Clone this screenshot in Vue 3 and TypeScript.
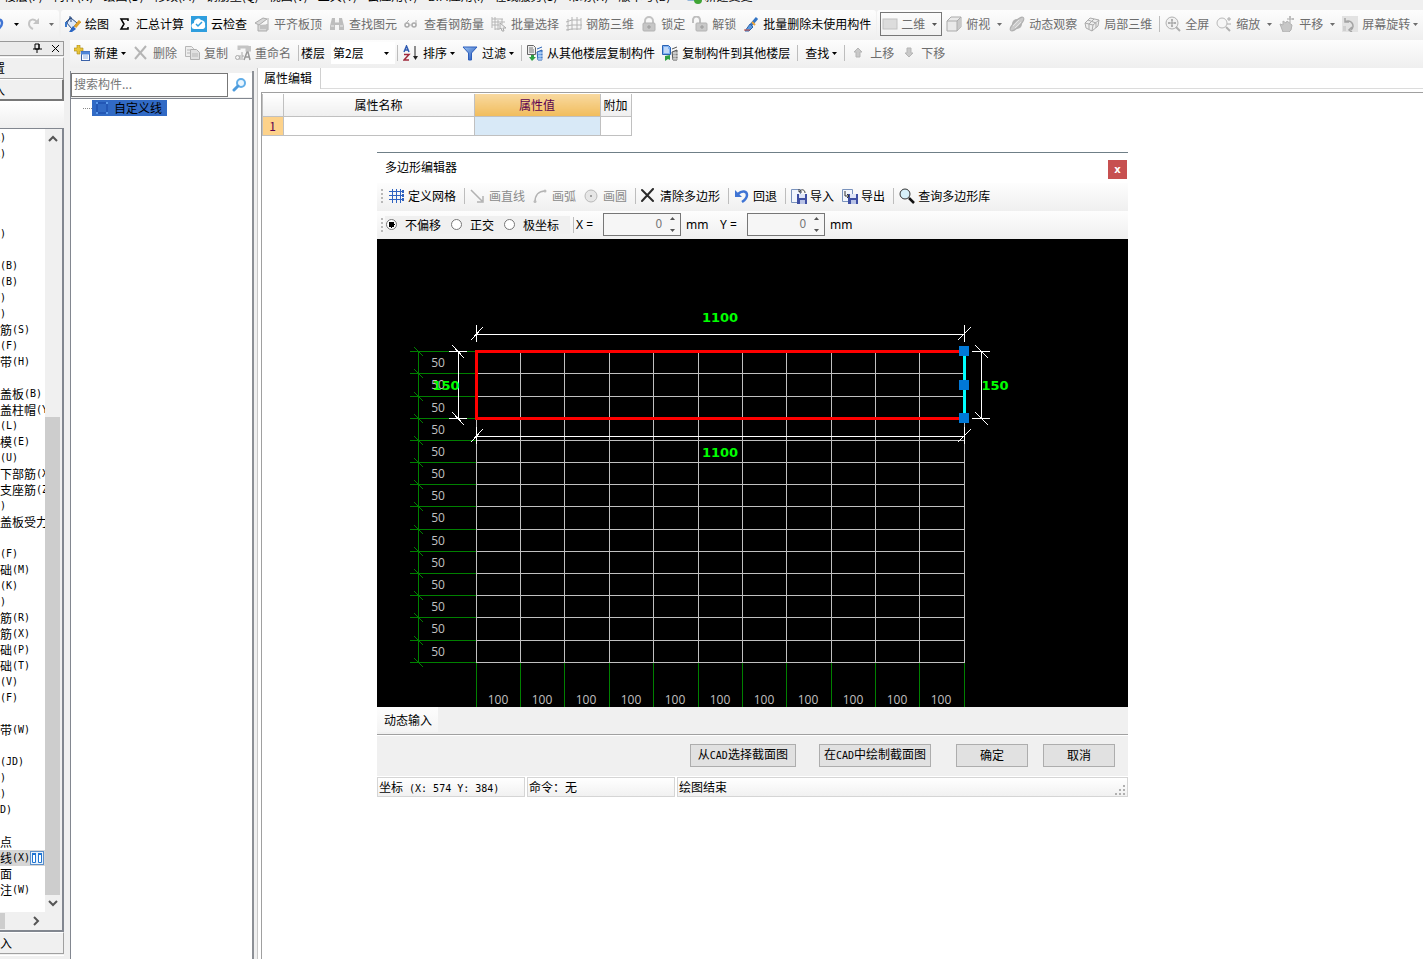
<script setup lang="ts">
import { ref } from 'vue'

interface Tool {
  icon?: string
  text?: string
  off?: boolean
  caret?: 'near' | 'far'
  sep?: boolean
}

interface Row {
  zh?: string
  en?: string
  cut?: boolean
  active?: boolean
}

const menus = ['楼层(F)', '构件(N)', '绘图(D)', '修改(M)', '钢筋量(Q)', '视图(V)', '工具(T)', '云应用(Y)', 'BIM应用(I)', '在线服务(S)', '帮助(H)', '版本号(B)']

const drawTools: Tool[] = [
  { icon: 'paint', text: '绘图' },
  { icon: 'sigma', text: '汇总计算' },
  { icon: 'cloud', text: '云检查' },
  { icon: 'slab', text: '平齐板顶', off: true },
  { icon: 'binoc', text: '查找图元', off: true },
  { icon: 'glasses', text: '查看钢筋量', off: true },
  { icon: 'batch', text: '批量选择', off: true },
  { icon: 'rebar', text: '钢筋三维', off: true },
  { icon: 'lock', text: '锁定', off: true },
  { icon: 'unlock', text: '解锁', off: true },
  { icon: 'brush', text: '批量删除未使用构件' },
]

const viewTools: Tool[] = [
  { icon: 'cube', text: '俯视', off: true, caret: 'far' },
  { icon: 'orbit', text: '动态观察', off: true },
  { icon: 'local3d', text: '局部三维', off: true },
  { sep: true },
  { icon: 'full', text: '全屏', off: true },
  { icon: 'zoom', text: '缩放', off: true, caret: 'far' },
  { icon: 'hand', text: '平移', off: true, caret: 'far' },
  { icon: 'rotate', text: '屏幕旋转', off: true, caret: 'near' },
]

const editTools: Tool[] = [
  { icon: 'new', text: '新建', caret: 'near' },
  { icon: 'del', text: '删除', off: true },
  { icon: 'copy', text: '复制', off: true },
  { icon: 'rename', text: '重命名', off: true },
]

const floorTools: Tool[] = [
  { sep: true },
  { icon: 'sort', text: '排序', caret: 'near' },
  { icon: 'filter', text: '过滤', caret: 'near' },
  { sep: true },
  { icon: 'copyfrom', text: '从其他楼层复制构件' },
  { icon: 'copyto', text: '复制构件到其他楼层' },
  { sep: true },
  { text: '查找', caret: 'near' },
  { sep: true },
  { icon: 'up', text: '上移', off: true },
  { icon: 'down', text: '下移', off: true },
]

const polyTools: Tool[] = [
  { icon: 'grid', text: '定义网格' },
  { sep: true },
  { icon: 'line', text: '画直线', off: true },
  { icon: 'arc', text: '画弧', off: true },
  { icon: 'circle', text: '画圆', off: true },
  { sep: true },
  { icon: 'clear', text: '清除多边形' },
  { sep: true },
  { icon: 'undo', text: '回退' },
  { sep: true },
  { icon: 'import', text: '导入' },
  { icon: 'export', text: '导出' },
  { sep: true },
  { icon: 'search', text: '查询多边形库' },
]

const rows: Row[] = [
  { en: 'A)', cut: true }, { en: 'A)', cut: true }, {}, {}, {}, {}, { en: ')' }, {},
  { en: '(B)' }, { en: '(B)' }, { en: 'Y)', cut: true }, { en: 'Y)', cut: true },
  { zh: '筋', en: '(S)' }, { en: '(F)' }, { zh: '带', en: '(H)' }, {},
  { zh: '盖板', en: '(B)' }, { zh: '盖柱帽', en: '(Y)' }, { en: '(L)' }, { zh: '模', en: '(E)' },
  { en: '(U)' }, { zh: '下部筋', en: '(X)' }, { zh: '支座筋', en: '(Z)' }, { en: ')' },
  { zh: '盖板受力' }, {}, { en: '(F)' }, { zh: '础', en: '(M)' },
  { en: '(K)' }, { en: ')' }, { zh: '筋', en: '(R)' }, { zh: '筋', en: '(X)' },
  { zh: '础', en: '(P)' }, { zh: '础', en: '(T)' }, { en: '(V)' }, { en: '(F)' }, {},
  { zh: '带', en: '(W)' }, {}, { en: '(JD)' }, { en: ')' }, { en: 'X)', cut: true }, { en: 'D)' }, {},
  { zh: '点' }, { zh: '线', en: '(X)', active: true }, { zh: '面' }, { zh: '注', en: '(W)' },
]

/* Drawing area coordinates */
const gx = [99, 143, 187, 232, 276, 321, 365, 409, 454, 498, 542, 587]
const gy = [112, 134, 157, 179, 201, 223, 245, 267, 290, 312, 334, 356, 378, 401, 423]

const offsetMode = ref('none')
const modes = [
  { id: 'none', text: '不偏移' },
  { id: 'ortho', text: '正交' },
  { id: 'polar', text: '极坐标' },
]
const axes = ref([
  { name: 'X', value: '0' },
  { name: 'Y', value: '0' },
])
const keyword = ref('')
</script>

<template>
  <svg class="defs" width="0" height="0" aria-hidden="true">
    <linearGradient id="gBlue" x1="0" y1="0" x2="1" y2="1"><stop offset="0" stop-color="#9cc4f4" /><stop offset="1" stop-color="#1d4fb4" /></linearGradient>
    <symbol id="i-paint" viewBox="0 0 16 16"><path d="M1 6 6 2l6 5-5 6z" fill="#dfe9f8" stroke="#24477f" /><path d="M2 7 5 1.500M6 6V1L4 1" fill="none" stroke="#24477f" /><path d="M1 6v5" stroke="#3a78cc" stroke-width="2" /><path d="m15 5-5 6" stroke="#e0a12c" stroke-width="3" /><path d="M8 10l3 3-4 3H4z" fill="#2c67c4" /></symbol>
    <symbol id="i-sigma" viewBox="0 0 16 16"><path d="M12 5V3H5l3 5-3 5h7v-2" fill="none" stroke="#000" stroke-width="1.500" /></symbol>
    <symbol id="i-cloud" viewBox="0 0 16 16"><rect width="16" height="16" fill="#2f9ede" /><path d="M4 13a3 3 0 0 1-1-6 4 4 0 0 1 7-3 4 4 0 0 1 4 5 3 3 0 0 1-2 4z" fill="#fff" /><path d="m5 8 2 2 4-4" fill="none" stroke="#2f9ede" stroke-width="1.500" /></symbol>
    <symbol id="i-slab" viewBox="0 0 16 16"><path d="m1 7 8-5 4 1-8 6zM4 9v6h9V8" fill="#d8d8d8" stroke="#ababab" /><path d="M6 10h6M6 12h6M14 2v12" stroke="#aaa" /></symbol>
    <symbol id="i-binoc" viewBox="0 0 16 16"><path d="M3 2h3v4h4V2h3l2 8v4h-5V9H6v5H1v-4z" fill="#bdbdbd" /><path d="M2 10h3M11 10h3M7 4v3M9 4v3" stroke="#eee" /></symbol>
    <symbol id="i-glasses" viewBox="0 0 16 16"><circle cx="3" cy="9" r="2" fill="none" stroke="#aaa" stroke-width="1.500" /><circle cx="10" cy="9" r="2" fill="none" stroke="#aaa" stroke-width="1.500" /><path d="M1 8 5 4M12 10V4M5 9h3" fill="none" stroke="#b5b5b5" /></symbol>
    <symbol id="i-batch" viewBox="0 0 16 16"><path d="M1 1v11M4 1v13M1 3h11M1 6h13M1 9h7M7 4v10M11 3v5M4 13h5" stroke="#b5b5b5" fill="none" /><path d="m9 7 6 5-3 0 1 3-2 0-1-3-1 1z" fill="#eee" stroke="#aaa" /></symbol>
    <symbol id="i-rebar" viewBox="0 0 16 16"><path d="M2 3v12M6 1v13M11 1v13M15 2v11M0 6l6-2h9M0 10l6-1h10M0 14l6-1h9" stroke="#b4b4b4" fill="none" /></symbol>
    <symbol id="i-lock" viewBox="0 0 16 16"><path d="M4 8V5a4 4 0 0 1 8 0v3" fill="none" stroke="#c2c2c2" stroke-width="2" /><rect x="2" y="7" width="12" height="8" rx="1" fill="#c6c6c6" stroke="#b3b3b3" /><path d="M8 9v4M6 11h4" stroke="#999" /></symbol>
    <symbol id="i-unlock" viewBox="0 0 16 16"><path d="M1 7V4a3 3 0 0 1 7 0v3" fill="none" stroke="#bebebe" stroke-width="2" /><rect x="4" y="7" width="11" height="8" rx="1" fill="#c9c9c9" stroke="#b3b3b3" /><path d="M10 9v4M8 11h4" stroke="#999" /></symbol>
    <symbol id="i-brush" viewBox="0 0 16 16"><path d="m14 2-6 7" stroke="#3475c4" stroke-width="3" /><path d="m9 6 3 3" stroke="#e9a33b" stroke-width="2" /><path d="M7 8l3 3-4 4H2z" fill="#5a9ae0" stroke="#2e63ab" /><path d="M1 14h6" stroke="#d44d37" /></symbol>
    <symbol id="i-rect" viewBox="0 0 16 16"><rect x="1" y="3" width="14" height="10" fill="#dcdcdc" stroke="#c2c2c2" /></symbol>
    <symbol id="i-cube" viewBox="0 0 16 16"><path d="M1 5 5 1h10v10l-4 4H1z" fill="#e9e9e9" stroke="#ababab" /><path d="m11 5 4-4v10l-4 4z" fill="#c9c9c9" /><path d="M1 5h10v10M11 5l4-4" fill="none" stroke="#ababab" /></symbol>
    <symbol id="i-orbit" viewBox="0 0 16 16"><circle cx="8" cy="8" r="5" fill="#b4b4b4" /><ellipse cx="8" cy="8" rx="9" ry="3" transform="rotate(-45 8 8)" fill="#cacaca" stroke="#b0b0b0" /><path d="m4 10 6-6M6 12l6-6" stroke="#e4e4e4" /></symbol>
    <symbol id="i-local3d" viewBox="0 0 16 16"><path d="m1 7 5-5 9 2-1 6-6 5-6-3z" fill="#eee" stroke="#ababab" /><path d="m1 7 8 2 6-5M9 9l-1 6M5 8v5M4 4l8 3v5M10 3 5 8" fill="none" stroke="#ababab" /></symbol>
    <symbol id="i-full" viewBox="0 0 16 16"><circle cx="7" cy="7" r="6" fill="#f1f1f1" stroke="#b0b0b0" /><path d="M7 3v8M3 7h8M6 4h2M6 10h2M4 6v2M10 6v2" stroke="#999" /><path d="m11 11 4 4" stroke="#b0b0b0" stroke-width="2" /></symbol>
    <symbol id="i-zoom" viewBox="0 0 16 16"><circle cx="6" cy="7" r="5" fill="#f6f6f6" stroke="#b9b9b9" /><path d="m10 11 4 4" stroke="#b0b0b0" stroke-width="2" /><path d="M13 1v4M11 3h4M11 8h4" stroke="#aaa" /></symbol>
    <symbol id="i-hand" viewBox="0 0 16 16"><path d="M1 8l3 1V5l3 2 1-2 5 4-1 5-2 2H4z" fill="#c7c7c7" stroke="#b2b2b2" /><path d="M11 0v7M8 3h7M10 1h2M14 2v2" stroke="#aaa" /></symbol>
    <symbol id="i-rotate" viewBox="0 0 16 16"><rect width="16" height="16" fill="#e2e2e2" /><path d="M3 6a5 5 0 1 1 6 8M3 2v4h4M10 11l-3 3 3 2" fill="none" stroke="#a4a4a4" stroke-width="1.500" /><rect x="1" y="10" width="3" height="5" fill="#cfcfcf" /></symbol>
    <symbol id="i-new" viewBox="0 0 16 16"><path d="M3 0h3v3h3v3H6v3H3V6H0V3h3z" fill="#e8c53a" stroke="#a98716" stroke-width=".6" /><rect x="7.500" y="6.500" width="8" height="9" fill="#fff" stroke="#3b62a8" /><path d="M7 8h9" stroke="#4f86d9" stroke-width="3" /><path d="M9 11h5M9 13h5" stroke="#8db0e4" /></symbol>
    <symbol id="i-del" viewBox="0 0 16 16"><path d="m2 2 11 12M13 1 2 14" stroke="#b5b5b5" stroke-width="2" /></symbol>
    <symbol id="i-copy" viewBox="0 0 16 16"><path d="M1.500 1.500h6l2 2v8h-8z" fill="#eee" stroke="#b7b7b7" /><path d="M6.500 4.500h6l3 3v7h-9z" fill="#e0e0e0" stroke="#b0b0b0" /><path d="M3 5h3M3 8h3M8 9h6M8 11h6" stroke="#b7b7b7" /></symbol>
    <symbol id="i-rename" viewBox="0 0 16 16"><path d="M4 5V2h8v3h3V1" fill="none" stroke="#c4c4c4" stroke-width="3" /><path d="m9 15 3-8h1l2 8M10 12h4" fill="none" stroke="#999" stroke-width="1.500" /><circle cx="2.500" cy="12.500" r="2" fill="none" stroke="#aaa" /><path d="M5 10v5M7 7v8M7 11h2" fill="none" stroke="#aaa" /></symbol>
    <symbol id="i-sort" viewBox="0 0 16 16"><path d="m1 7 2.500-6L6 7M2 5h3" fill="none" stroke="#2f5ab0" stroke-width="1.500" /><path d="M1 9.500h5L1 15h5" fill="none" stroke="#a02a3c" stroke-width="1.500" /><path d="M12 1v12" stroke="#222" /><path d="M10 11h5l-2.500 4z" fill="#222" /></symbol>
    <symbol id="i-filter" viewBox="0 0 16 16"><path d="M1 2h14L9.500 8v7h-3V8z" fill="url(#gBlue)" stroke="#2d5fbd" /></symbol>
    <symbol id="i-copyfrom" viewBox="0 0 16 16"><path d="M.5.500h6l2 2v7h-8z" fill="#eee" stroke="#666" /><path d="M2 3h4M2 5h5M2 7h5" stroke="#777" /><path d="M10 4l5-2M10 7l5-2v10h-4z" fill="#6fa6e8" stroke="#2a62b4" /><path d="M11 8h5M11 11h5M11 14h5" stroke="#dcebff" /><path d="M4 10v2H2l3 4 4-4H7v-2z" fill="#2ea043" /></symbol>
    <symbol id="i-copyto" viewBox="0 0 16 16"><path d="M.5.500h6l2 2v7h-8z" fill="#7fb0f0" stroke="#2a62b4" /><path d="M2 3h4M2 5h5M2 7h5" stroke="#fff" /><path d="M10 4l5-2M10 7l5-2v10h-4z" fill="#aaa" stroke="#555" /><path d="M11 8h5M11 11h5M11 14h5" stroke="#eee" /><path d="M3 11l5-1v5l-2-1-3 2z" fill="#2ea043" /></symbol>
    <symbol id="i-up" viewBox="0 0 16 16"><path d="M8 3l4 4h-2v5H6V7H4z" fill="#c9c9c9" stroke="#b5b5b5" /></symbol>
    <symbol id="i-down" viewBox="0 0 16 16"><path d="M8 12l4-4h-2V3H6v5H4z" fill="#c9c9c9" stroke="#b5b5b5" /></symbol>
    <symbol id="i-grid" viewBox="0 0 16 16"><path d="M3.500 1v14M7.500 1v14M11.500 1v14M0 3.500h14M0 7.500h14M0 11.500h14" stroke="#2f62c0" /><path d="M13 2h2v3h-2zM13 6h2v3h-2zM13 10h2v3h-2z" fill="#2f62c0" /></symbol>
    <symbol id="i-line" viewBox="0 0 16 16"><path d="m1 2 11 11M13 8v6H7" fill="none" stroke="#b2b2b2" stroke-width="1.500" /></symbol>
    <symbol id="i-arc" viewBox="0 0 16 16"><path d="M2 14C2 7 6 3 12 3" fill="none" stroke="#b2b2b2" stroke-width="1.500" /><circle cx="2" cy="13.500" r="1.500" fill="#bbb" /><circle cx="12" cy="3" r="1.500" fill="#bbb" /></symbol>
    <symbol id="i-circle" viewBox="0 0 16 16"><circle cx="7" cy="8" r="6" fill="#e6e6e6" stroke="#b9b9b9" /><circle cx="7" cy="8" r="1" fill="#888" /></symbol>
    <symbol id="i-clear" viewBox="0 0 16 16"><path d="m1 2 11 11M12 1 1 13" stroke="#2b2b2b" stroke-width="2" stroke-linecap="round" /></symbol>
    <symbol id="i-undo" viewBox="0 0 16 16"><path d="M4 6c4-4 9-3 9 1 0 3-2 5-5 7" fill="none" stroke="#3f74d4" stroke-width="2.500" /><path d="M1 2v7h7z" fill="#3f74d4" /></symbol>
    <symbol id="i-redo" viewBox="0 0 16 16"><path d="M10 6C7 2 2 3 2 8c0 3 2 4 4 5" fill="none" stroke="#c4c4c4" stroke-width="2" /><path d="M12 2v6H6z" fill="#c4c4c4" /></symbol>
    <symbol id="i-import" viewBox="0 0 16 16"><path d="M.5 1.500h9v13h-9z" fill="#f2f6fd" stroke="#7a93bd" /><rect x="6" y="6" width="10" height="10" fill="#3e4fa3" /><rect x="8" y="6" width="6" height="4" fill="#dfe5f7" /><rect x="9" y="12" width="5" height="4" fill="#b9c3e6" /><path d="M8 4c3-4 6-2 6 1M8 1v3h3" fill="none" stroke="#444" /></symbol>
    <symbol id="i-export" viewBox="0 0 16 16"><path d="M.5 1.500h10v12H.5z" fill="#f2f6fd" stroke="#7a93bd" /><rect x="6" y="6" width="10" height="10" fill="#3e4fa3" /><rect x="8" y="6" width="6" height="4" fill="#dfe5f7" /><rect x="9" y="12" width="5" height="4" fill="#b9c3e6" /><path d="M3 3v5h4M5 6l2 2-2 2" fill="none" stroke="#333" /></symbol>
    <symbol id="i-search" viewBox="0 0 16 16"><circle cx="6" cy="6" r="5" fill="#d8f1fa" stroke="#333" /><path d="m10 10 5 5" stroke="#111" stroke-width="2.500" /></symbol>
    <symbol id="i-find" viewBox="0 0 16 16"><circle cx="9" cy="6" r="4" fill="#eaf6ff" stroke="#62aee8" stroke-width="2" /><path d="m6 9-4 4" stroke="#4d9bdc" stroke-width="3" stroke-linecap="round" /></symbol>
    <symbol id="i-doc" viewBox="0 0 16 16"><rect x="1" y="1" width="13" height="11" fill="#fff" stroke="#3a7cc4" /><circle cx="11" cy="12" r="4" fill="#3fa535" /></symbol>
    <symbol id="i-shape" viewBox="0 0 16 16"><path d="M3 3h10v10H3z" fill="none" stroke="#1745a5" /><path d="M2 2h2v2H2zM12 2h2v2h-2zM2 12h2v2H2zM12 12h2v2h-2z" fill="#5b9bea" /></symbol>
    <symbol id="i-book" viewBox="0 0 12 12"><path d="M0 0h12v12H0z" fill="#e7f2fd" /><path d="M1.500 2.500h3v8h-3zM7.500 2.500h3v8h-3z" fill="#fff" stroke="#1f74d2" /><path d="M1 2h4M7 2h4" stroke="#1f74d2" stroke-width="2" /></symbol>
    <symbol id="i-caret" viewBox="0 0 5 3"><path d="M0 0h5L2.500 3z" fill="currentColor" /></symbol>
  </svg>

  <div class="app">
    <nav class="menu">
      <a v-for="m in menus" :key="m" href="#">{{ m }}</a>
      <svg class="ico"><use href="#i-doc" /></svg>
      <a href="#">新建变更</a>
    </nav>

    <div class="top">
      <div class="bar history">
        <button class="tool" aria-label="撤销"><svg class="ico"><use href="#i-undo" /></svg></button>
        <button class="drop" aria-label="撤销列表"><svg class="caret"><use href="#i-caret" /></svg></button>
        <button class="tool redo" aria-label="恢复"><svg class="ico"><use href="#i-redo" /></svg></button>
        <button class="drop off" aria-label="恢复列表"><svg class="caret"><use href="#i-caret" /></svg></button>
      </div>
      <div class="bar draw">
        <button v-for="t in drawTools" :key="t.text" class="tool" :class="{ off: t.off }">
          <svg class="ico"><use :href="'#i-' + t.icon" /></svg>{{ t.text }}
        </button>
      </div>
      <div class="bar view">
        <div class="dimension">
          <svg class="ico"><use href="#i-rect" /></svg>
          <select aria-label="视图维度"><option>二维</option><option>三维</option></select>
          <svg class="caret"><use href="#i-caret" /></svg>
        </div>
        <template v-for="(t, i) in viewTools" :key="i">
          <span v-if="t.sep" class="sep"></span>
          <button v-else class="tool off">
            <svg class="ico"><use :href="'#i-' + t.icon" /></svg>{{ t.text }}
            <svg v-if="t.caret" class="caret" :class="t.caret"><use href="#i-caret" /></svg>
          </button>
        </template>
      </div>
    </div>

    <div class="body">
      <aside class="dock">
        <header class="dock-head">
          <button aria-label="固定"><svg width="9" height="11" viewBox="0 0 9 11"><path d="M2 1h4v5H2zM0 6h9M4 6v4M6 1v5" fill="none" stroke="#000" /></svg></button>
          <button aria-label="关闭"><svg width="9" height="9" viewBox="0 0 9 9"><path d="m1 1 7 7M8 1 1 8" stroke="#000" /></svg></button>
        </header>
        <button class="fold"><span class="clipped">置</span></button>
        <button class="fold deep"><span class="clipped">入</span></button>
        <div class="strip"></div>
        <div class="list">
          <div class="list-main">
            <ul>
              <li v-for="(r, i) in rows" :key="i" :class="{ cut: r.cut, active: r.active }">
                <span v-if="r.zh">{{ r.zh }}</span><span v-if="r.en" class="half">{{ r.en }}</span>
                <svg v-if="r.active" class="mark"><use href="#i-book" /></svg>
              </li>
            </ul>
            <div class="scroll">
              <svg width="16" height="17" viewBox="0 0 16 17"><path d="m4 10 4-4 4 4" fill="none" stroke="#555" stroke-width="2" /></svg>
              <i class="before"></i><i class="thumb"></i>
              <svg width="16" height="17" viewBox="0 0 16 17"><path d="m4 6 4 4 4-4" fill="none" stroke="#555" stroke-width="2" /></svg>
            </div>
          </div>
          <div class="hscroll"><i></i><svg width="8" height="16" viewBox="0 0 8 16"><path d="m2 4 4 4-4 4" fill="none" stroke="#555" stroke-width="2" /></svg></div>
        </div>
        <button class="fold last">入</button>
        <div class="rest"></div>
      </aside>

      <div class="work">
        <div class="bar edit">
          <button v-for="t in editTools" :key="t.text" class="tool" :class="{ off: t.off }">
            <svg class="ico"><use :href="'#i-' + t.icon" /></svg>{{ t.text }}
            <svg v-if="t.caret" class="caret" :class="t.caret"><use href="#i-caret" /></svg>
          </button>
          <span class="sep tight"></span>
          <label for="floor">楼层</label>
          <div class="floor">
            <select id="floor"><option>第2层</option><option>第1层</option></select>
            <svg class="caret"><use href="#i-caret" /></svg>
          </div>
          <template v-for="(t, i) in floorTools" :key="i">
            <span v-if="t.sep" class="sep"></span>
            <button v-else class="tool" :class="{ off: t.off, plain: !t.icon }">
              <svg v-if="t.icon" class="ico"><use :href="'#i-' + t.icon" /></svg>{{ t.text }}
              <svg v-if="t.caret" class="caret" :class="t.caret"><use href="#i-caret" /></svg>
            </button>
          </template>
        </div>

        <div class="panes">
          <section class="tree">
            <div class="find">
              <input v-model="keyword" type="text" placeholder="搜索构件..." aria-label="搜索构件">
              <button aria-label="搜索"><svg class="ico"><use href="#i-find" /></svg></button>
            </div>
            <div class="nodes">
              <i class="twig"></i>
              <button class="node"><svg class="ico"><use href="#i-shape" /></svg>自定义线</button>
            </div>
          </section>

          <section class="props">
            <div class="tabs"><button class="tab">属性编辑</button></div>
            <div class="sheet">
              <table>
                <thead>
                  <tr><th class="c-num"></th><th class="c-name">属性名称</th><th class="c-value">属性值</th><th class="c-add">附加</th></tr>
                </thead>
                <tbody>
                  <tr><td class="num">1</td><td></td><td class="cell"></td><td></td></tr>
                </tbody>
              </table>
            </div>
          </section>
        </div>
      </div>
    </div>

    <div class="dialog" role="dialog" aria-label="多边形编辑器">
      <header class="title"><span>多边形编辑器</span><button class="close" aria-label="关闭">x</button></header>
      <div class="bar poly">
        <i class="grip"></i>
        <template v-for="(t, i) in polyTools" :key="i">
          <span v-if="t.sep" class="sep"></span>
          <button v-else class="tool" :class="{ off: t.off }"><svg class="ico"><use :href="'#i-' + t.icon" /></svg>{{ t.text }}</button>
        </template>
      </div>
      <div class="bar options">
        <i class="grip"></i>
        <div class="modes">
          <label v-for="m in modes" :key="m.id"><input v-model="offsetMode" type="radio" name="mode" :value="m.id">{{ m.text }}</label>
        </div>
        <span class="sep"></span>
        <template v-for="a in axes" :key="a.name">
          <label class="axis" :for="'axis' + a.name">{{ a.name }} =</label>
          <div class="spin">
            <input :id="'axis' + a.name" v-model="a.value" type="text">
            <div class="arrows">
              <button aria-label="增加"><svg width="5" height="3" viewBox="0 0 5 3"><path d="M0 3h5L2.500 0z" fill="#555" /></svg></button>
              <button aria-label="减少"><svg width="5" height="3" viewBox="0 0 5 3"><path d="M0 0h5L2.500 3z" fill="#555" /></svg></button>
            </div>
          </div>
          <span class="unit">mm</span>
        </template>
      </div>

      <svg class="canvas" viewBox="0 0 751 468" shape-rendering="crispEdges">
        <rect width="751" height="468" fill="#000" />
        <g fill="#008000">
          <rect x="41" y="112" width="1" height="312" />
          <rect v-for="y in gy" :key="'gh' + y" x="33" :y="y" width="66" height="1" />
          <rect v-for="x in gx" :key="'gv' + x" :x="x" y="424" width="1" height="44" />
        </g>
        <path v-for="y in gy" :key="'t' + y" :d="`M37 ${y - 4}l9 9`" stroke="#008000" />
        <g fill="#c0c0c0">
          <rect v-for="y in gy" :key="'h' + y" x="99" :y="y" width="489" height="1" />
          <rect v-for="x in gx" :key="'v' + x" :x="x" y="112" width="1" height="312" />
        </g>
        <g class="small">
          <text v-for="y in gy.slice(0, -1)" :key="'a' + y" x="61" :y="y + 16" text-anchor="middle">50</text>
          <text v-for="x in gx.slice(0, -1)" :key="'b' + x" :x="x + 22" y="465" text-anchor="middle">100</text>
        </g>
        <g fill="#fff">
          <rect x="99" y="95" width="489" height="1" /><rect x="99" y="197" width="489" height="1" />
          <rect x="99" y="86" width="1" height="17" /><rect x="587" y="86" width="1" height="17" />
          <rect x="99" y="188" width="1" height="17" /><rect x="587" y="188" width="1" height="17" />
          <rect x="81" y="112" width="1" height="68" /><rect x="604" y="112" width="1" height="68" />
          <rect x="72" y="112" width="18" height="1" /><rect x="72" y="179" width="18" height="1" />
          <rect x="595" y="112" width="18" height="1" /><rect x="595" y="179" width="18" height="1" />
        </g>
        <path d="M94 101l12-13M581 101l13-13M94 203l12-13M581 203l13-13M75 106l12 13M75 173l12 13M598 106l13 13M598 173l13 13" stroke="#fff" />
        <g fill="#f00">
          <rect x="98" y="111" width="490" height="3" /><rect x="98" y="178" width="490" height="3" /><rect x="98" y="111" width="3" height="70" />
        </g>
        <rect x="586" y="112" width="3" height="68" fill="#0ff" />
        <g fill="#0078d7"><rect x="582" y="107" width="10" height="10" /><rect x="582" y="141" width="10" height="10" /><rect x="582" y="174" width="10" height="10" /></g>
        <g class="big">
          <text x="343" y="83" text-anchor="middle">1100</text>
          <text x="343" y="218" text-anchor="middle">1100</text>
          <text x="69" y="151" text-anchor="middle">150</text>
          <text x="618" y="151" text-anchor="middle">150</text>
        </g>
      </svg>

      <div class="dynamic"><button>动态输入</button></div>
      <footer class="actions">
        <button class="btn">从<span class="half">CAD</span>选择截面图</button>
        <button class="btn gap-l">在<span class="half">CAD</span>中绘制截面图</button>
        <button class="btn wide gap-xl">确定</button>
        <button class="btn wide">取消</button>
      </footer>
      <div class="status">
        <span class="s1">坐标<span class="half"> (X: 574 Y: 384)</span></span>
        <span class="s1">命令：无</span>
        <span class="s2">绘图结束
          <svg width="11" height="11" viewBox="0 0 11 11"><path d="M8 0h2v2H8zM8 4h2v2H8zM4 4h2v2H4zM8 8h2v2H8zM4 8h2v2H4zM0 8h2v2H0z" fill="#b0b0b0" /></svg>
        </span>
      </div>
    </div>
  </div>
</template>

<style>
body { margin: 0; overflow: hidden; }
</style>

<style scoped>
.defs { position: absolute; }
.app, .app button, .app input, .app select {
  font-family: "Noto Sans CJK SC", "Liberation Sans", sans-serif;
  font-size: 12px;
  line-height: 16px;
  color: #000;
}
.app { position: relative; display: flex; flex-direction: column; height: 100vh; overflow: hidden; background: #f0f0f0; }
.app *, .app *::before { box-sizing: border-box; }
.app button { margin: 0; padding: 0; border: 0; background: none; white-space: nowrap; }
.app select { appearance: none; border: 0; margin: 0; padding: 0; background: none; }
.half { font-family: "DejaVu Sans Mono", monospace; font-size: 10px; white-space: pre; }
.ico { flex: none; width: 16px; height: 16px; }
.caret { flex: none; width: 5px; height: 3px; color: inherit; }

.menu { display: flex; flex: none; align-items: flex-end; gap: 10px; height: 10px; padding: 0 4px 6px; overflow: hidden; }
.menu a { color: #000; text-decoration: none; white-space: nowrap; }
.menu .ico { margin: 0 -8px 0 6px; }

.top { display: flex; flex: none; height: 30px; }
.bar { display: flex; align-items: center; padding-bottom: 2px; background: linear-gradient(#fdfdfd, #efefef); white-space: nowrap; }
.tool { display: flex; flex: none; align-items: center; gap: 4px; }
.app .tool { margin-right: 7px; }
.app .off { color: #6d6d6d; }
.app .plain { padding-left: 2px; }
.caret.near { margin-left: -1px; }
.caret.far { margin-left: 3px; }
.sep { flex: none; width: 1px; height: 16px; margin-right: 5px; background: #bdbdbd; }
.sep.tight { margin-right: 2px; }
.history { width: 59px; margin-right: 2px; border-radius: 0 3px 3px 0; }
.app .history .tool:first-child { margin: 0 9px 0 -11px; }
.history .drop { display: flex; }
.app .history .redo { margin: 0 6px 0 8px; }
.draw { padding-left: 4px; margin-right: 1px; border-radius: 3px; }
.app .draw .tool:last-child { margin-right: 5px; }
.view { flex: 1; padding-left: 3px; min-width: 0; border-radius: 3px 0 0 3px; }
.dimension { display: flex; flex: none; align-items: center; width: 62px; height: 24px; margin-right: 4px; padding: 0 4px 0 1px; border: 1px solid #777; color: #555; }
.app .dimension select { flex: 1; width: 30px; padding-left: 3px; color: #6d6d6d; }

.body { display: flex; flex: 1; min-height: 0; }
.dock { display: flex; flex: none; flex-direction: column; width: 64px; margin-right: 6px; }
.dock-head { display: flex; align-items: center; justify-content: flex-end; gap: 9px; height: 15px; margin: 1px 0; padding-right: 3px; border: 1px solid #999; border-left: 0; background: #ebebeb; }
.dock-head button { display: flex; }
.app .fold { display: flex; align-items: center; height: 22px; border-right: 1px solid #a0a0a0; border-bottom: 1px solid #a0a0a0; border-top: 1px solid #fff; }
.app .deep { border-right: 2px solid #777; border-bottom: 2px solid #777; }
.clipped { margin-left: -7px; }
.strip { height: 27px; background: linear-gradient(#fff, #efefef); }
.list { display: flex; flex: 1; flex-direction: column; min-height: 0; border: solid #828790; border-width: 1px 2px 2px 0; }
.list-main { display: flex; flex: 1; min-height: 0; background: #fff; }
.list ul { flex: 1; margin: 0; padding: 1px 0 0; overflow: hidden; list-style: none; }
.list li { display: flex; align-items: center; height: 16px; white-space: nowrap; }
.list .cut { margin-left: -6px; }
.list .active { background: #d6d6d6; }
.mark { flex: none; width: 14px; height: 14px; border: 1px solid #5c8fc9; }
.scroll { display: flex; flex-direction: column; width: 17px; padding: 2px 2px 0 0; background: #f0f0f0; }
.before { flex: 269; }
.thumb { flex: 479; background: #cdcdcd; }
.hscroll { display: flex; align-items: center; height: 18px; background: #f0f0f0; }
.hscroll i { width: 5px; height: 16px; margin-right: 27px; background: #cdcdcd; }
.rest { height: 4px; margin-top: 1px; border-top: 1px solid #fff; }

.work { display: flex; flex: 1; flex-direction: column; min-width: 0; }
.edit { flex: none; height: 28px; padding-left: 4px; }
.floor { display: flex; flex: none; align-items: center; width: 64px; height: 22px; margin: 0 2px 0 6px; padding: 0 6px 0 2px; background: #fff; }
.floor select { flex: 1; width: 50px; }
.panes { display: flex; flex: 1; min-height: 0; }
.tree { display: flex; flex: none; flex-direction: column; width: 184px; margin-top: 3px; border-right: 2px solid #8c9096; border-left: 1px solid #828790; }
.find { display: flex; height: 27px; padding-top: 2px; }
.find input { width: 157px; height: 24px; padding: 0 2px 4px; border: 1px solid #777; background: #fff; }
.find input::placeholder { color: #777; }
.find button { display: flex; flex: 1; align-items: center; justify-content: center; height: 24px; background: #fff; }
.nodes { display: flex; flex: 1; align-items: flex-start; padding: 1px 0 0 12px; border-top: 1px solid #828790; background: #fff; }
.twig { width: 9px; margin-top: 8px; border-top: 1px dotted #888; }
.app .node { display: flex; align-items: center; gap: 4px; height: 16px; padding: 0 5px 0 2px; background: #316ac5; }

.props { display: flex; flex: 1; flex-direction: column; min-width: 0; margin-left: 3px; border-left: 1px solid #c8c8c8; background: #fff; }
.tabs { height: 21px; border-bottom: 1px solid #dcdcdc; }
.app .tab { height: 21px; padding: 0 8px 2px 6px; border-right: 1px solid #d0d0d0; background: #fff; }
.sheet { flex: 1; margin: 3px 0 0 3px; border-top: 1px solid #a0a0a0; border-left: 1px solid #a0a0a0; }
.sheet table { width: 370px; margin-top: 1px; border-collapse: collapse; table-layout: fixed; }
.sheet th, .sheet td { padding: 0 1px 0 0; border: 1px solid #c0c0c0; font-weight: normal; text-align: center; }
.sheet th { height: 22px; border-top: 0; background: linear-gradient(#fff, #efefef); }
.sheet td { height: 19px; }
.c-num { width: 21px; }
.c-name { width: 191px; }
.c-value { width: 126px; }
.sheet .c-value { background: linear-gradient(#f8d9a0, #f1bd5d); color: #5a0050; }
.c-add { width: 31px; }
.sheet .num { background: #fdd28a; color: #5a0050; }
.sheet .cell { background: #d8e9f7; }

.dialog { position: absolute; top: 152px; left: 377px; width: 751px; background: #f0f0f0; border-top: 1px solid #6f7f87; }
.title { display: flex; align-items: flex-start; justify-content: space-between; height: 30px; padding: 6px 1px 0 8px; background: #fff; }
.app .close { width: 19px; height: 19px; margin-top: 1px; background: #c75050; color: #fff; font-family: "DejaVu Sans", sans-serif; font-size: 10px; font-weight: bold; }
.poly, .options { height: 28px; padding-left: 4px; }
.options { padding-bottom: 1px; }
.poly .tool { gap: 3px; }
.app .poly .tool { margin-right: 8px; }
.app .poly .off { color: #8a8a8a; }
.grip { flex: none; width: 2px; height: 14px; margin-right: 6px; background: repeating-linear-gradient(#b8b8b8 0 2px, transparent 2px 4px); }
.options .grip { margin-right: 2px; }
.modes { display: flex; align-items: center; gap: 10px; height: 18px; margin-right: 3px; padding: 0 11px 0 1px; background: #f0f0f0; }
.modes label { display: flex; align-items: center; gap: 8px; }
.modes input { appearance: none; width: 11px; height: 11px; margin: 0; border: 1px solid #777; border-radius: 50%; background: #fff; }
.modes input:checked { background: radial-gradient(#000 0 3px, #fff 3px); }
.options .sep { margin-right: 2px; }
.axis, .unit { font-family: "Noto Sans", sans-serif; }
.axis { width: 27px; }
.unit { width: 34px; margin-left: 5px; }
.spin { display: flex; flex: none; width: 78px; height: 23px; border: 1px solid #777; background: #f6f6f6; }
.app .spin input { flex: 1; min-width: 0; padding: 0 0 3px; border: 0; background: none; color: #777; text-align: right; }
.arrows { display: flex; flex-direction: column; justify-content: space-between; width: 18px; padding: 3px 4px 3px 8px; }
.arrows button { display: flex; }
.canvas { display: block; width: 100%; }
.small { font: 12px "Open Sans", sans-serif; fill: #c0c0c0; }
.big { font: bold 13px "DejaVu Sans", sans-serif; fill: #0f0; }

.dynamic { height: 28px; border-bottom: 1px solid #a0a0a0; }
.dynamic button { height: 25px; padding: 0 6px 0 7px; background: linear-gradient(#fdfdfd, #f4f4f4); }
.actions { display: flex; align-items: center; justify-content: flex-end; height: 41px; padding: 0 13px 2px 0; border-top: 1px solid #fff; }
.app .btn { height: 23px; padding: 0 7px; border: 1px solid #adadad; background: #e1e1e1; }
.app .btn.gap-l { margin: 0 25px 0 23px; padding: 0 4px; }
.app .btn.wide { width: 72px; }
.app .btn.gap-xl { margin-right: 15px; }
.status { display: flex; gap: 2px; padding-top: 1px; background: #fff; }
.status > span { height: 20px; padding: 0 1px; border: 1px solid #d5d5d5; line-height: 18px; background: linear-gradient(#fff, #f1f1f1); }
.status .s1 { width: 148px; }
.status .s2 { display: flex; flex: 1; align-items: flex-end; justify-content: space-between; }
</style>
